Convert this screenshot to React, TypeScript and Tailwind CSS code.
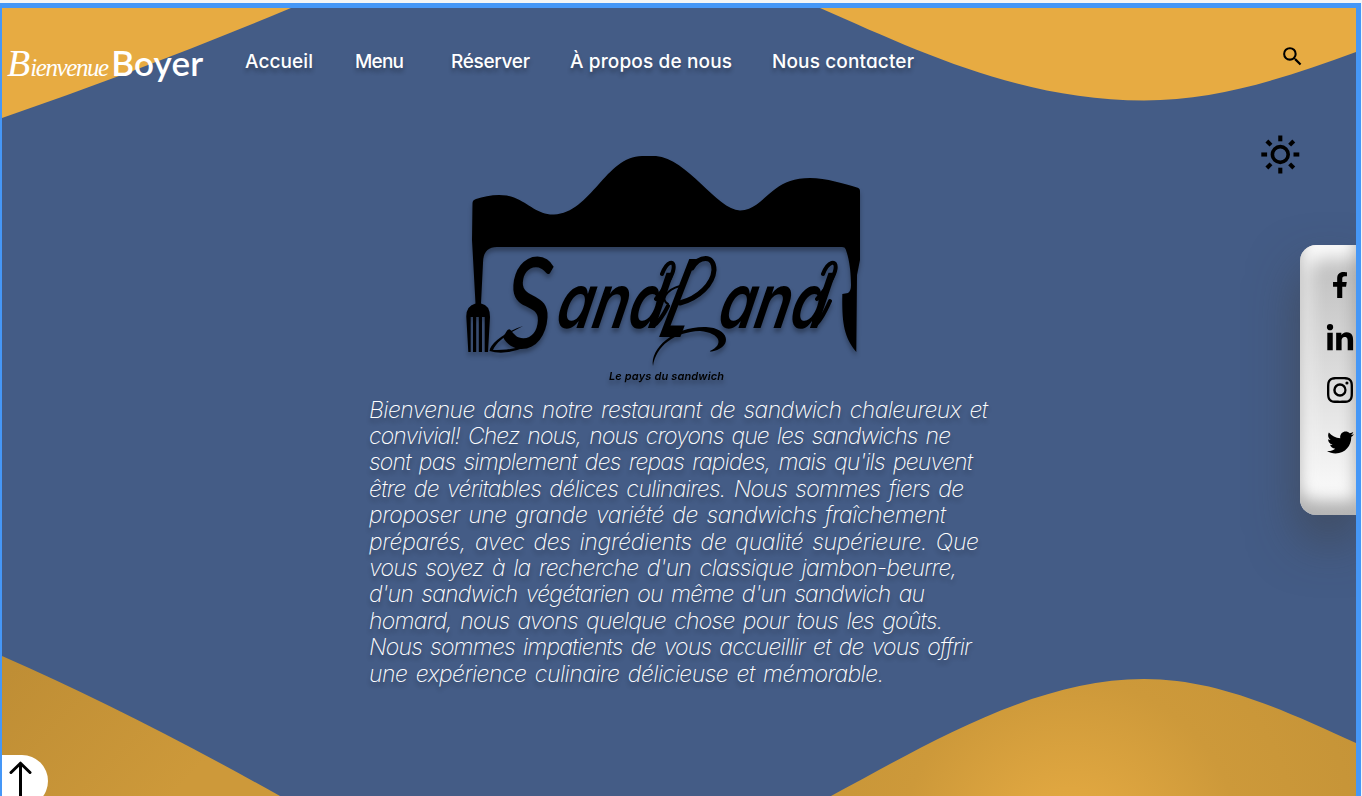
import { useLayoutEffect, useRef, useState } from "react";
import { MdSearch } from "react-icons/md";
import { FaFacebookF, FaLinkedinIn, FaTwitter } from "react-icons/fa";
import { BsInstagram } from "react-icons/bs";

/** One line of text whose tracking is adjusted to fill a given width. */
function Tracked({ text, width, className = "" }: { text: string; width: number; className?: string }) {
  const ref = useRef<HTMLSpanElement>(null);
  const [spacing, setSpacing] = useState(0);
  useLayoutEffect(() => {
    if (ref.current) {
      setSpacing((width - ref.current.getBoundingClientRect().width) / (text.length - 1));
    }
  }, [text, width]);
  return (
    <span className={`block whitespace-nowrap ${className}`} style={{ width }}>
      <span ref={ref} style={{ letterSpacing: spacing }}>
        {text}
      </span>
    </span>
  );
}

const links = [
  { label: "Accueil", width: 68, gap: "ml-0" },
  { label: "Menu", width: 49, gap: "ml-[42px]" },
  { label: "Réserver", width: 79, gap: "ml-[47px]" },
  { label: "À propos de nous", width: 162, gap: "ml-[40px]" },
  { label: "Nous contacter", width: 142, gap: "ml-[40px]" },
];

const lines = [
  { text: "Bienvenue dans notre restaurant de sandwich chaleureux et", width: 619 },
  { text: "convivial! Chez nous, nous croyons que les sandwichs ne", width: 582 },
  { text: "sont pas simplement des repas rapides, mais qu'ils peuvent", width: 604 },
  { text: "être de véritables délices culinaires. Nous sommes fiers de", width: 595 },
  { text: "proposer une grande variété de sandwichs fraîchement", width: 577 },
  { text: "préparés, avec des ingrédients de qualité supérieure. Que", width: 610 },
  { text: "vous soyez à la recherche d'un classique jambon-beurre,", width: 588 },
  { text: "d'un sandwich végétarien ou même d'un sandwich au", width: 556 },
  { text: "homard, nous avons quelque chose pour tous les goûts.", width: 574 },
  { text: "Nous sommes impatients de vous accueillir et de vous offrir", width: 603 },
  { text: "une expérience culinaire délicieuse et mémorable.", width: 515 },
];

function Waves() {
  return (
    <svg className="absolute inset-0" width="1354" height="788" viewBox="2 8 1354 788">
      <defs>
        <radialGradient id="right" gradientUnits="userSpaceOnUse" cx="1070" cy="850" r="340">
          <stop offset="0" stopColor="#e6ac42" />
          <stop offset="0.18" stopColor="#dfa640" />
          <stop offset="0.5" stopColor="#cd993a" />
          <stop offset="1" stopColor="#c49337" />
        </radialGradient>
        <linearGradient id="left" gradientUnits="userSpaceOnUse" x1="2" y1="680" x2="150" y2="820">
          <stop offset="0" stopColor="#bf8e35" />
          <stop offset="1" stopColor="#cd993a" />
        </linearGradient>
      </defs>
      <path d="M2 8H291Q150 67 2 118Z" fill="#e7ab42" />
      <path d="M820 8C920 52 1022 100.500 1144 100.500C1217 100.500 1282 79 1356 52V8Z" fill="#e7ab42" />
      <path d="M2 656Q130 712 280 796H2Z" fill="url(#left)" />
      <path d="M831 796C921 748 1032 679 1144 679C1217 679 1281 709 1356 743V796Z" fill="url(#right)" />
    </svg>
  );
}

function Logo() {
  return (
    <svg className="block overflow-visible [filter:drop-shadow(0_4px_2px_rgba(0,0,0,0.3))]" width="396" height="240" viewBox="466 150 396 240">
      <path d="M472.5 203Q472.5 200 476 199C487 195 503 193 514 197.500C530 204 538 215 554 214.500C591 213 606 156 642 156H656C687 158 717 210 740 210.500C765 210 769 178 810 178C826 178 845 184 857 187.500Q860 188 860 191V260L857 275L856.300 352C843 336 842 320 842.300 294L848 293Q851 291 851 285C851 262 846 250 845.500 249Q845 247 842 247H497Q483 247 483 263L481 303.500Q490 305 490 317L488 352H484.700V317H482V352H478.800V317H476.200V352H473V317H470.700V352H468.300L466.300 317Q466 306 475.500 303.500L472 240Z" />
      <g fontStyle="italic" fontFamily="Inter, sans-serif" className="[font-feature-settings:'cv11']">
        <text fontFamily="Lato, sans-serif" fontWeight="500" fontSize="126" transform="translate(502 348) skewX(-3) scale(0.76 1)">
          S
        </text>
        <text fontWeight="600" fontSize="76" transform="translate(554 328) skewX(-12) scale(0.76 1)">
          and
        </text>
        <text fontFamily="Lato, sans-serif" fontWeight="700" fontSize="108" transform="translate(657 337) skewX(-18) scale(0.5 1)">
          L
        </text>
        <text fontWeight="600" fontSize="76" transform="translate(716 328) skewX(-12) scale(0.76 1)">
          and
        </text>
      </g>
      <g fill="none" stroke="#000" strokeWidth="4" strokeLinecap="round">
        <path d="M662 274C667 261 675 259 673.500 269C672 279 662 291 656 299M823 274C828 261 837 259 835.500 269C834 279 824 291 817 299M653 326C658 323 664 314 668 306M814 326C819 323 826 310 830 301" />
        <path d="M692 268C699 256 714 254 714 270C713 284 699 298 680 303" strokeWidth="5" />
        <path d="M680 286C666 290 660 300 668 304" strokeWidth="2" />
      </g>
      <path d="M523 326C504 332 490 344 489.500 351Q508 357 536 342Q511 351 493 350C496 342 507 334 523 326Z" />
      <path d="M653 366C650 348 675 326 706 327C729 328 733 346 714 351Q709 352 710 351C724 345 721 333 700 331C674 332 656 346 653 366Z" />
      <text x="609" y="380" fontFamily="Inter, sans-serif" fontStyle="italic" fontWeight="600" fontSize="11" textLength="115" className="[font-feature-settings:'cv11']">
        Le pays du sandwich
      </text>
    </svg>
  );
}

function Sun() {
  return (
    <svg width="40" height="40" viewBox="-20.3 -20.5 40 40" fill="none" stroke="#000">
      <circle r="7.9" strokeWidth="3.600" />
      {[0, 45, 90, 135, 180, 225, 270, 315].map((a) => (
        <path key={a} d="M0 -13.200V-19" strokeWidth="4.100" transform={`rotate(${a})`} />
      ))}
    </svg>
  );
}

export default function App() {
  return (
    <div className="h-[796px] w-[1362px] overflow-hidden bg-[#f4f5f6] pr-px pt-[3px] [font-family:Inter,sans-serif] [font-feature-settings:'cv11']">
      <div className="relative h-[793px] overflow-hidden border-l-2 border-r-[5px] border-t-[5px] border-[#4597f7] bg-[#445c86]">
        <Waves />
        <div className="relative flex h-[788px] flex-col">
          <header className="flex h-[110px] items-start text-white">
            <div className="flex h-[90px] w-[243px] items-baseline pl-[5px] pt-[27px]">
              <span className="flex items-baseline italic [font-family:'Liberation_Serif',serif]">
                <span className="text-[38px] leading-[54px]">B</span>
                <Tracked text="ienvenue" width={79} className="text-[25px]" />
              </span>
              <Tracked text="Boyer" width={92} className="ml-[2px] text-[35px] font-semibold leading-[54px] [font-family:Lato,sans-serif]" />
            </div>
            <nav className="flex pt-[39px] text-[19px] font-medium leading-[30px] [text-shadow:0_4px_4px_rgba(0,0,0,0.3)]">
              {links.map((l) => (
                <a key={l.label} className={l.gap}>
                  <Tracked text={l.label} width={l.width} />
                </a>
              ))}
            </nav>
            <button className="ml-auto mr-[51px] mt-[36px] text-black" aria-label="Rechercher">
              <MdSearch size={25} />
            </button>
          </header>
          <main className="flex h-[678px] justify-between">
            <div className="h-[41px] w-[46px] self-end overflow-hidden">
              <button className="block h-[52px] w-[46px] rounded-r-[26px] bg-white" aria-label="Haut de page">
                <svg width="46" height="52" viewBox="2 755 46 52" fill="none" stroke="#000" strokeWidth="3" strokeLinecap="round" strokeLinejoin="round">
                  <path d="M20.500 800V763.500M11 772.500L20.500 763.200L30 772.500" />
                </svg>
              </button>
            </div>
            <section className="ml-[51px] flex w-[620px] flex-col pt-[32px] text-white">
              <div className="ml-[97px] h-[240px]">
                <Logo />
              </div>
              <div className="mt-[6.500px] text-[23px] font-extralight italic leading-[26.4px] [word-spacing:2.5px] [text-shadow:0_4px_4px_rgba(0,0,0,0.3)]">
                {lines.map((l) => (
                  <Tracked key={l.text} text={l.text} width={l.width} />
                ))}
              </div>
            </section>
            <aside className="flex w-[97px] flex-col items-end pt-[16px] text-black">
              <button className="mr-[56px]" aria-label="Thème">
                <Sun />
              </button>
              <div className="mt-[71px] flex h-[270px] w-[56px] flex-col items-center gap-[26px] rounded-l-[16px] bg-linear-to-b from-[#bdbdbd] to-white pl-[24px] pt-[27px] shadow-[0_25px_50px_rgba(60,60,60,0.55),inset_0_-14px_16px_rgba(0,0,0,0.3),inset_8px_14px_18px_rgba(255,255,255,0.95)]">
                <FaFacebookF size={26} className="shrink-0" />
                <FaLinkedinIn size={30} className="shrink-0" />
                <BsInstagram size={26} className="-mt-[3px] shrink-0" />
                <FaTwitter size={27} className="shrink-0" />
              </div>
            </aside>
          </main>
        </div>
      </div>
    </div>
  );
}
